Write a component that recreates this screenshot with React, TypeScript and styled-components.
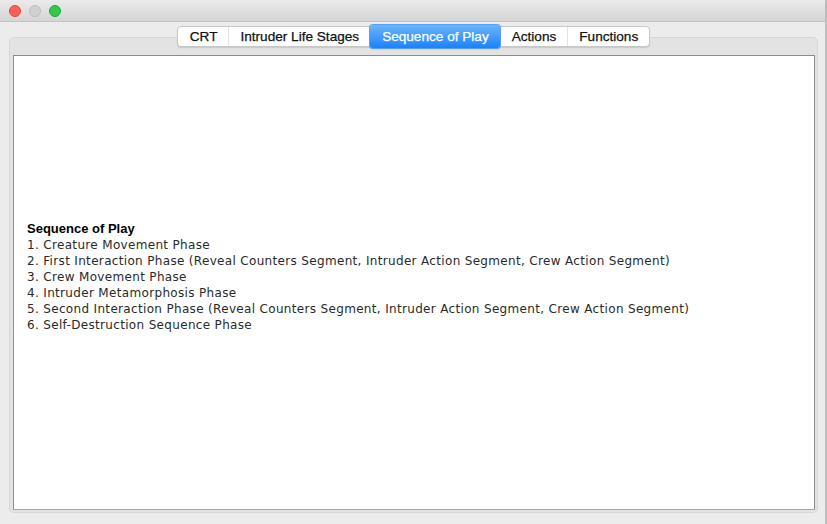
import React, { useState } from "react";
import styled, { createGlobalStyle } from "styled-components";

const GlobalStyle = createGlobalStyle`
  html, body {
    margin: 0;
    padding: 0;
    background: #ececec;
  }
  * {
    box-sizing: border-box;
  }
`;

const TABS = ["CRT", "Intruder Life Stages", "Sequence of Play", "Actions", "Functions"];

const PHASES = [
  "Creature Movement Phase",
  "First Interaction Phase (Reveal Counters Segment, Intruder Action Segment, Crew Action Segment)",
  "Crew Movement Phase",
  "Intruder Metamorphosis Phase",
  "Second Interaction Phase (Reveal Counters Segment, Intruder Action Segment, Crew Action Segment)",
  "Self-Destruction Sequence Phase",
];

const App: React.FC = () => {
  const [selected, setSelected] = useState(2);

  return (
    <Window>
      <GlobalStyle />
      <TitleBar>
        <Light color="#fc605c" border="#e0443e" />
        <Light color="#d0d0d0" border="#bdbdbd" />
        <Light color="#34c84a" border="#23a633" />
      </TitleBar>
      <Body>
        <TabBar>
          {TABS.map((tab, i) => (
            <Tab
              key={tab}
              $active={i === selected}
              $divider={i > 0 && i !== selected && i - 1 !== selected}
              onClick={() => setSelected(i)}
            >
              {tab}
            </Tab>
          ))}
        </TabBar>
        <Panel>
          <Content>
            <Text>
              <Heading>Sequence of Play</Heading>
              {PHASES.map((phase, i) => (
                <Line key={phase}>
                  {i + 1}. {phase}
                </Line>
              ))}
            </Text>
          </Content>
        </Panel>
      </Body>
    </Window>
  );
};

export default App;

const Window = styled.div`
  width: 827px;
  height: 524px;
  display: flex;
  flex-direction: column;
  background: #ececec;
  border-right: 2px solid #bdbdbd;
  overflow: hidden;
`;

const TitleBar = styled.div`
  height: 22px;
  flex: none;
  display: flex;
  align-items: center;
  gap: 8px;
  padding-left: 9px;
  background: linear-gradient(#ebebeb, #d5d5d5);
  border-bottom: 1px solid #c4c4c4;
  border-top-right-radius: 5px;
`;

const Light = styled.div<{ color: string; border: string }>`
  width: 12px;
  height: 12px;
  border-radius: 50%;
  background: ${(p) => p.color};
  border: 0.5px solid ${(p) => p.border};
`;

const Body = styled.div`
  flex: 1;
  display: flex;
  flex-direction: column;
  padding: 4px 7px 11px 9px;
  min-height: 0;
`;

const TabBar = styled.div`
  position: relative;
  z-index: 1;
  align-self: center;
  display: flex;
  align-items: center;
  height: 21px;
  margin-bottom: -10px;
  background: #fff;
  border: 1px solid #c8c8c8;
  border-radius: 4px;
  box-shadow: 0 1px 1px rgba(0, 0, 0, 0.12);
`;

const Tab = styled.div<{ $active: boolean; $divider: boolean }>`
  height: ${(p) => (p.$active ? "23px" : "19px")};
  display: flex;
  align-items: center;
  padding: 0 11px;
  font-family: "Liberation Sans", Arial, sans-serif;
  font-size: 13.6px;
  color: ${(p) => (p.$active ? "#fff" : "#111")};
  cursor: default;
  border-left: 1px solid ${(p) => (p.$divider ? "#e2e2e2" : "transparent")};
  background: ${(p) =>
    p.$active ? "linear-gradient(#6cb5fb, #1b82fb)" : "transparent"};
  border-radius: ${(p) => (p.$active ? "3px" : "0")};
  box-shadow: ${(p) =>
    p.$active ? "0 0 0 1px #5a9ff0, 0 1px 2px rgba(20, 100, 220, 0.35)" : "none"};
  -webkit-text-stroke: 0.25px currentColor;
`;

const Panel = styled.div`
  flex: 1;
  display: flex;
  padding: 17px 2px 2px 3px;
  background: #e3e3e3;
  border: 1px solid #d6d6d6;
  border-radius: 5px;
  min-height: 0;
`;

const Content = styled.div`
  flex: 1;
  display: flex;
  align-items: center;
  padding: 0 13px 12px;
  background: #fff;
  border: 1px solid #8c8c8c;
  border-bottom-color: #a8a8a8;
`;

const Text = styled.div`
  font-family: "DejaVu Sans", "Liberation Sans", sans-serif;
  font-size: 12px;
  line-height: 16px;
  letter-spacing: 0.33px;
  color: #2a2a2a;
`;

const Heading = styled.div`
  font-family: "Liberation Sans", Arial, sans-serif;
  font-weight: bold;
  font-size: 13px;
  letter-spacing: 0;
  color: #000;
`;

const Line = styled.div`
  white-space: nowrap;
`;
